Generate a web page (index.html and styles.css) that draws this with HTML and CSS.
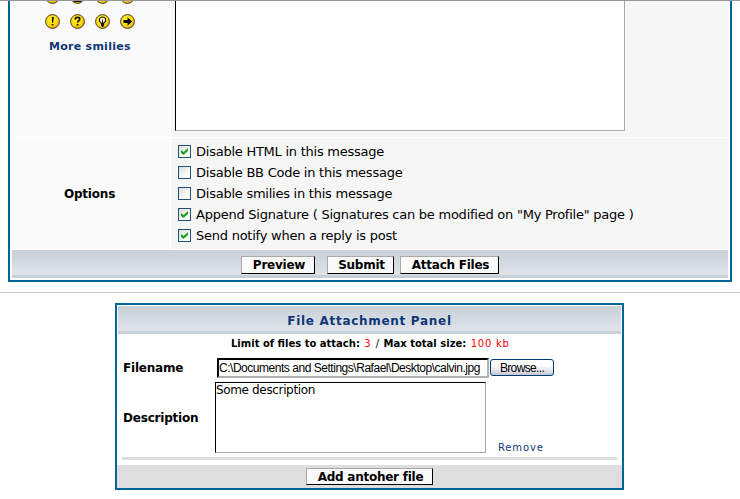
FILE: index.html
```html
<!DOCTYPE html>
<html lang="en">
<head>
<meta charset="utf-8">
<title>Post message</title>
<link rel="stylesheet" href="styles.css">
</head>
<body>
<svg width="0" height="0" class="defs">
  <defs>
    <radialGradient id="gold" cx=".4" cy=".35" r=".7"><stop offset="0" stop-color="#fff22c"/><stop offset=".65" stop-color="#ffd90a"/><stop offset="1" stop-color="#e6a400"/></radialGradient>
    <symbol id="disc" viewBox="0 0 15 15"><circle cx="7.5" cy="7.5" r="6.9" fill="url(#gold)" stroke="#4a3b2c"/></symbol>
  </defs>
</svg>
<main class="post">
  <section class="message">
    <div class="side">
      <div class="smilies">
        <svg viewBox="0 0 15 15"><use href="#disc"/></svg>
        <svg viewBox="0 0 15 15"><use href="#disc"/><path d="M4 11h7v2H4z" fill="#1a1408"/></svg>
        <svg viewBox="0 0 15 15"><use href="#disc"/></svg>
        <svg viewBox="0 0 15 15"><use href="#disc"/></svg>
        <svg viewBox="0 0 15 15"><use href="#disc"/><path d="M6.8 3h2L8.2 8.8H7zM6.6 10h1.8v1.6H6.6z" fill="#16120a"/></svg>
        <svg viewBox="0 0 15 15"><use href="#disc"/><path d="M5.3 5.7V5c0-2.2 4.5-2.2 4.5 0 0 1.7-2.2 1.6-2.2 3.7M6.7 10.8h1.8" fill="none" stroke="#16120a" stroke-width="1.6"/></svg>
        <svg viewBox="0 0 15 15"><use href="#disc"/><path d="M6 9 4.5 7.2V4.7L6.2 3.2h2.6l1.7 1.5v2.5L9 9z" fill="#fffbd0" stroke="#16120a" stroke-width="1.1"/><path d="M7.5 5.5v4" stroke="#16120a"/><path d="M6 9h3v2.7L7.5 13.2 6 11.7z" fill="#16120a"/></svg>
        <svg viewBox="0 0 15 15"><use href="#disc"/><path d="M3.5 6h4V3.3l4.7 4.2-4.7 4.2V9h-4z" fill="#080806"/></svg>
      </div>
      <a class="more">More smilies</a>
    </div>
    <div class="editor"><div class="message-box"></div></div>
    <div class="options-title"><b>Options</b></div>
    <div class="options">
      <label><i class="check on"></i><span>Disable HTML in this message</span></label>
      <label><i class="check"></i><span>Disable BB Code in this message</span></label>
      <label><i class="check"></i><span>Disable smilies in this message</span></label>
      <label><i class="check on"></i><span>Append Signature ( Signatures can be modified on "My Profile" page )</span></label>
      <label><i class="check on"></i><span>Send notify when a reply is post</span></label>
    </div>
    <div class="actions">
      <button class="preview">Preview</button>
      <button class="submit">Submit</button>
      <button class="attach">Attach Files</button>
    </div>
  </section>
</main>
<hr>
<section class="panel">
  <h2>File Attachment Panel</h2>
  <p class="limits"><b>Limit of files to attach:</b> <em>3</em> / <b>Max total size:</b> <em>100 kb</em></p>
  <div class="file-row">
    <b class="field-name">Filename</b>
    <div class="path"><span>C:\Documents and Settings\Rafael\Desktop\calvin.jpg</span></div>
    <button class="browse">Browse...</button>
  </div>
  <div class="description-row">
    <b class="field-name">Description</b>
    <div class="description">Some description</div>
    <a class="remove">Remove</a>
  </div>
  <div class="rule"></div>
  <footer><button class="add">Add antoher file</button></footer>
</section>
</body>
</html>
```
FILE: styles.css
```css
* { box-sizing: border-box; }
body {
  margin: 0;
  height: 499px;
  overflow: hidden;
  background: #fff;
  border-top: 1px solid #999499;
  font: 13px/16px "DejaVu Sans", sans-serif;
  color: #000;
}
.defs { position: absolute; }
.post { padding: 0 8px; height: 281px; }
.message {
  display: grid;
  grid-template-columns: 158px 557px;
  grid-template-rows: 136px 111px 28px;
  gap: 1px;
  width: 724px;
  height: 281px;
  padding: 0 2px 2px;
  border: solid #006699;
  border-width: 0 2px 2px;
}
.side, .options-title { background: #fafafa; }
.editor, .options { background: #f6f6f6; }
.side { overflow: hidden; }
.smilies {
  display: grid;
  grid-template-columns: repeat(4, 15px);
  gap: 10px;
  margin: -12px 0 0 33px;
}
.smilies svg { width: 15px; height: 15px; display: block; }
.more {
  display: block;
  margin: 10px 0 0 37px;
  color: #103778;
  font-size: 11px;
  font-weight: bold;
  line-height: 16px;
  letter-spacing: .27px;
}
.message-box {
  width: 450px;
  height: 130px;
  margin-left: 4px;
  background: #fff;
  border: solid #a9a9a9;
  border-width: 0 1px 1px 0;
  border-left: 1px solid #000;
}
.options-title { display: flex; align-items: center; justify-content: center; padding-right: 3px; font-size: 12px; letter-spacing: -.2px; }
.options { padding: 3px 0 0 7px; }
.options label { display: flex; align-items: center; height: 21px; gap: 5px; white-space: nowrap; letter-spacing: -.245px; }
.check {
  width: 13px;
  height: 13px;
  border: 1px solid #1c5180;
  background: linear-gradient(135deg, #dcdcd7, #fff 75%);
}
.check.on::after {
  content: "";
  display: block;
  width: 7px;
  height: 7px;
  margin: 2px;
  background: #21a121;
  clip-path: polygon(0 29%, 36% 57%, 100% 0, 100% 43%, 36% 100%, 0 71%);
}
.actions {
  grid-column: 1 / 3;
  display: flex;
  padding: 6px 0 0 229px;
}
.actions, .panel h2 {
  background: linear-gradient(#c7d0d7, #dfe3e9);
  border-bottom: 3px solid #c8d0d7;
}
button {
  height: 18px;
  padding: 0 0 0 2px;
  font: bold 12px/14px "DejaVu Sans", sans-serif;
  letter-spacing: -.25px;
  color: #000;
  background: #fafafa;
  border: 1px solid #000;
  border-top-color: #a9a9a9;
  border-left-color: #a9a9a9;
  white-space: nowrap;
}
.preview { width: 74px; }
.submit { width: 67px; margin-left: 12px; }
.attach { width: 99px; margin-left: 6px; }
hr { margin: 10px 0; border: 0; height: 1px; background: #ccc; }
.panel {
  width: 509px;
  height: 187px;
  margin-left: 115px;
  border: 2px solid #006699;
  display: flex;
  flex-direction: column;
}
.panel h2 {
  margin: 1px;
  height: 28px;
  font-size: 12px;
  line-height: 30px;
  text-align: center;
  letter-spacing: .7px;
  color: #103778;
}
.limits { margin: 0 0 0 114px; height: 19px; font-size: 10px; line-height: 17px; white-space: nowrap; word-spacing: 1.2px; }
.limits b { word-spacing: 0; }
.limits em { color: #f00; font-style: normal; letter-spacing: .75px; word-spacing: 0; }
.file-row { display: flex; height: 28px; padding-left: 6px; }
.field-name { width: 92px; font-size: 12px; letter-spacing: -.2px; }
.file-row .field-name { width: 94px; padding-top: 6px; }
.path {
  width: 272px;
  height: 20px;
  margin-top: 4px;
  border: solid;
  border-width: 2px;
  border-color: #000 #b0b0b0 #b0b0b0 #000;
  font: 12px/17px "Liberation Sans", sans-serif;
  letter-spacing: -.47px;
  white-space: nowrap;
}
.browse {
  width: 64px;
  height: 17px;
  margin: 5px 0 0 1px;
  padding: 0;
  font: 12px/14px "Liberation Sans", sans-serif;
  letter-spacing: -.65px;
  border: 1px solid #003c74;
  border-radius: 3px;
  background: linear-gradient(#fff 35%, #e7e7f0 65%, #c6c5d7);
}
.description-row { display: flex; padding-left: 6px; height: 71px; }
.description-row .field-name { padding-top: 28px; }
.description {
  width: 271px;
  height: 71px;
  border: 1px solid;
  border-color: #000 #a9a9a9 #a9a9a9 #000;
  font-size: 12px;
  line-height: 15px;
  letter-spacing: -.35px;
}
.remove { align-self: flex-end; margin: 0 0 -1px 12px; font-size: 10px; line-height: 12px; letter-spacing: .85px; color: #103778; }
.rule { height: 3px; margin: 4px 5px 5px; background: #ddd; }
footer { height: 23px; padding: 3px 0 0 189px; background: #dedede; }
.add { display: block; width: 127px; height: 17px; }
```
